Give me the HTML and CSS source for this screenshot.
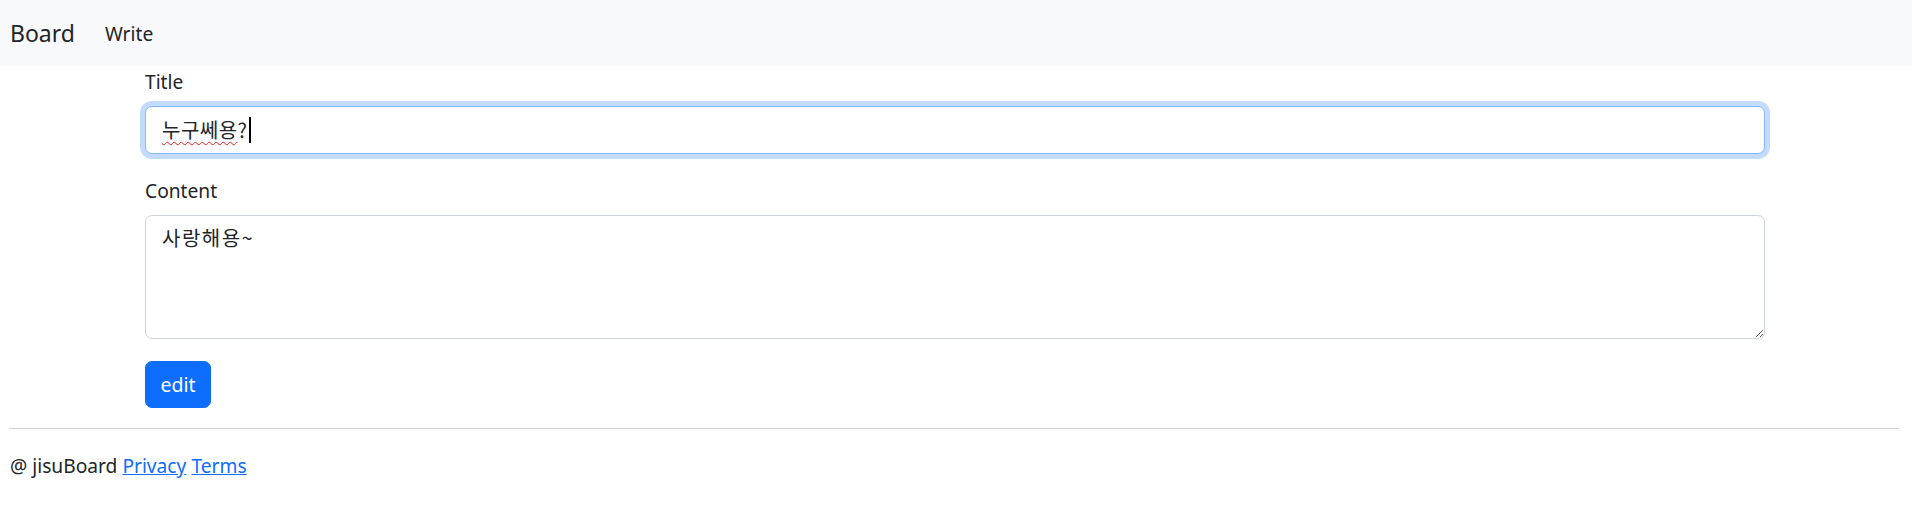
FILE: index.html
```html
<!DOCTYPE html>
<html lang="ko">
<head>
<meta charset="utf-8">
<title>Board</title>
<link rel="stylesheet" href="styles.css">
</head>
<body>
<nav class="navbar">
  <a class="brand" href="#">Board</a>
  <a class="nav-link" href="#">Write</a>
</nav>
<main class="container">
  <div class="field">
    <label class="form-label">Title</label>
    <div class="form-control focused" role="textbox"><span class="misspelled">누구쎄용</span>?<span class="caret"></span></div>
  </div>
  <div class="field">
    <label class="form-label">Content</label>
    <textarea class="form-control area">사랑해용~</textarea>
  </div>
  <button class="btn">edit</button>
</main>
<footer class="footer">
  <hr class="rule">
  <p class="foot-text">@ jisuBoard <a href="#">Privacy</a> <a href="#">Terms</a></p>
</footer>
</body>
</html>
```
FILE: styles.css
```css
* { box-sizing: border-box; }
body {
  margin: 0;
  font-family: "Noto Sans", "Noto Sans CJK KR", sans-serif;
  font-size: 19.2px;
  line-height: 1.5;
  color: #212529;
  background: #fff;
}
.navbar {
  display: flex;
  align-items: center;
  height: 66px;
  padding: 0 10px;
  background: #f8f9fa;
  gap: 30px;
}
.brand {
  font-size: 23px;
  color: #212529;
  text-decoration: none;
}
.nav-link {
  font-size: 19.2px;
  color: #212529;
  text-decoration: none;
  padding-top: 2px;
}
.container {
  padding: 1px 147px 0 145px;
}
.field { margin-bottom: 22px; }
.form-label {
  display: block;
  margin-bottom: 9px;
  line-height: 30px;
}
.form-control {
  display: block;
  width: 100%;
  height: 48px;
  padding: 7px 16px;
  font: inherit;
  font-family: "Noto Sans CJK KR", "Noto Sans", sans-serif;
  font-size: 20px;
  letter-spacing: 0.5px;
  line-height: 32px;
  color: #212529;
  background: #fff;
  border: 1px solid #ced4da;
  border-radius: 7px;
}
.focused {
  border-color: #86b7fe;
  box-shadow: 0 0 0 5px rgba(13, 110, 253, 0.25);
  display: flex;
  align-items: center;
}
.misspelled {
  text-decoration: underline wavy #e02020;
  text-decoration-thickness: 1px;
  text-underline-offset: 3px;
}
.caret {
  display: inline-block;
  width: 2px;
  height: 26px;
  background: #000;
  margin-left: 1px;
}
.area {
  height: 124px;
  padding: 6px 16px;
  resize: vertical;
  outline: none;
  letter-spacing: 1.5px;
}
.btn {
  display: block;
  margin-top: 20px;
  width: 66px;
  height: 47px;
  padding: 0;
  font: inherit;
  font-size: 19.5px;
  line-height: 30px;
  color: #fff;
  background: #0d6efd;
  border: 1px solid #0d6efd;
  border-radius: 7px;
}
.footer { padding: 0 13px 0 9px; }
.rule {
  margin: 20px 0 0;
  border: 0;
  border-top: 1px solid #d0d0d0;
}
.foot-text {
  margin: 22px 0 0 1px;
  line-height: 30px;
}
.foot-text a { color: #0d6efd; }
```
